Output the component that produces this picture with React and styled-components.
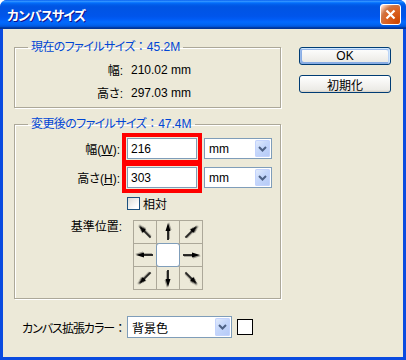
import React from "react";
import styled, { createGlobalStyle } from "styled-components";

const GlobalStyle = createGlobalStyle`
  html, body { margin: 0; padding: 0; background: #ffffff; }
  body {
    font-family: "Liberation Sans", "Noto Sans CJK JP", sans-serif;
    font-size: 12px;
    color: #000;
    font-feature-settings: "palt";
  }
`;

const Window = styled.div`
  width: 406px;
  height: 360px;
  box-sizing: border-box;
  display: flex;
  flex-direction: column;
  background: #0a4be0;
  border-radius: 7px 7px 0 0;
  overflow: hidden;
`;

const TitleBar = styled.div`
  height: 29px;
  flex: none;
  display: flex;
  align-items: center;
  justify-content: space-between;
  padding: 0 5px 0 7px;
  background: linear-gradient(
    to bottom,
    #0058ee 0%, #3593ff 4%, #288eff 6%, #127dff 8%, #036ffc 10%,
    #0262ee 14%, #0057e5 20%, #0054e3 24%, #0055eb 56%, #005bf5 66%,
    #026afe 76%, #0062ef 86%, #0052d6 92%, #0040ab 94%, #003092 100%
  );
`;

const Title = styled.span`
  color: #fff;
  font-weight: bold;
  font-size: 13px;
  letter-spacing: -1px;
  text-shadow: 1px 1px #0f1089;
`;

const CloseButton = styled.div`
  width: 21px;
  height: 21px;
  box-sizing: border-box;
  border: 1px solid #fff;
  border-radius: 3px;
  display: flex;
  align-items: center;
  justify-content: center;
  background: radial-gradient(circle at 90% 90%, #cc4600 0, #dc6527 55%, #cd7546 70%, #ffccb2 90%, #fff 100%);
`;

const Body = styled.div`
  flex: 1;
  margin: 0 3px 3px;
  background: #ece9d8;
  padding: 11px 12px 0 11px;
  display: flex;
  flex-direction: column;
`;

const Top = styled.div`
  display: grid;
  grid-template-columns: 267px 92px;
  column-gap: 18px;
`;

const LeftColumn = styled.div`
  display: flex;
  flex-direction: column;
  gap: 9px;
`;

const Group = styled.fieldset`
  margin: 0;
  padding: 0;
  min-width: 0;
  border: 1px solid #aca899;
  box-shadow: inset 1px 1px #fff, 1px 1px #fff;
`;

const Legend = styled.legend`
  margin-left: 13px;
  padding: 0 3px;
  line-height: 14px;
  color: #0046d5;
  white-space: nowrap;
  letter-spacing: -0.6px;
`;

const WideColon = styled.span`
  font-feature-settings: normal;
  letter-spacing: 0;
`;

const Latin = styled.span`
  letter-spacing: 0;
`;

const InfoGrid = styled.div`
  display: grid;
  grid-template-columns: 108px auto;
  column-gap: 8px;
  grid-auto-rows: 23px;
  align-items: center;
  padding: 4px 0 3px;
`;

const InfoLabel = styled.span`
  text-align: right;
`;

const EditArea = styled.div`
  padding: 7px 0 8px;
  display: flex;
  flex-direction: column;
`;

const FieldRow = styled.div`
  display: flex;
  align-items: center;
  gap: 7px;
  height: 21px;
  & + & { margin-top: 8px; }
`;

const FieldLabel = styled.span`
  width: 105px;
  text-align: right;
  u { text-decoration: underline; }
`;

const TextInput = styled.div`
  width: 70px;
  height: 21px;
  box-sizing: border-box;
  border: 1px solid #7f9db9;
  background: #fff;
  padding-left: 3px;
  display: flex;
  align-items: center;
  outline: ${(p) => (p.$marked ? "4px solid #ff0000" : "none")};
  outline-offset: 1px;
`;

const Select = styled.div`
  flex: none;
  width: ${(p) => p.$width}px;
  height: ${(p) => p.$height}px;
  box-sizing: border-box;
  border: 1px solid #7f9db9;
  background: #fff;
  padding-left: 4px;
  display: flex;
  align-items: center;
`;

const DropButton = styled.div`
  margin: 1px;
  margin-left: auto;
  width: 15px;
  align-self: stretch;
  border-radius: 2px;
  display: flex;
  align-items: center;
  justify-content: center;
  background: linear-gradient(135deg, #e6eefc 0%, #c5d7fb 45%, #b4c9f6 100%);
  box-shadow: inset 0 0 0 1px #c3d3fd;
`;

const CheckRow = styled.div`
  margin-top: 8px;
  padding-left: 112px;
  display: flex;
  align-items: center;
  gap: 3px;
  height: 14px;
`;

const CheckBox = styled.span`
  width: 13px;
  height: 13px;
  box-sizing: border-box;
  border: 1px solid #1c5180;
  background: linear-gradient(135deg, #dcdcd7 0%, #fff 80%);
`;

const AnchorRow = styled.div`
  margin-top: 10px;
  display: flex;
  align-items: flex-start;
`;

const AnchorLabel = styled.span`
  width: 107px;
  text-align: right;
  line-height: 14px;
`;

const AnchorGrid = styled.div`
  margin-left: 11px;
  display: grid;
  grid-template-columns: repeat(3, 22px);
  grid-template-rows: repeat(3, 22px);
  gap: 1px;
  padding: 1px;
  background: #aca899;
`;

const Cell = styled.div`
  background: #ece9d8;
  display: flex;
  align-items: center;
  justify-content: center;
`;

const CenterCell = styled.div`
  margin: -1px;
  background: #fff;
  border: 1px solid #7f9db9;
  border-radius: 3px;
`;

const ButtonColumn = styled.div`
  padding-top: 7px;
  display: flex;
  flex-direction: column;
  gap: 10px;
`;

const Button = styled.div`
  height: 18px;
  box-sizing: border-box;
  border: 1px solid #003c74;
  border-radius: 3px;
  display: flex;
  align-items: center;
  justify-content: center;
  background: linear-gradient(180deg, #fff 0%, #ecebe6 86%, #d6d0c5 100%);
  box-shadow: ${(p) =>
    p.$default
      ? "inset -1px 1px #cee7ff, inset 1px 2px #98b8ea, inset -2px 2px #bcd4f6, inset 1px -1px #89ade4, inset 2px -2px #89ade4"
      : "none"};
`;

const BottomRow = styled.div`
  margin-top: 17px;
  padding-left: 8px;
  display: flex;
  align-items: center;
`;

const BottomLabel = styled.span`
  width: 105px;
  flex: none;
  white-space: nowrap;
  letter-spacing: -1px;
`;

const Swatch = styled.span`
  margin-left: 5px;
  width: 16px;
  height: 16px;
  box-sizing: border-box;
  border: 1px solid #000;
  background: #fff;
`;

const Chevron = () => (
  <svg width="9" height="6" viewBox="0 0 9 6">
    <path d="M1 1 L4.5 4.5 L8 1" fill="none" stroke="#4d6185" strokeWidth="2" />
  </svg>
);

const Arrow = ({ angle }) => (
  <svg
    width="20"
    height="20"
    viewBox="0 0 20 20"
    style={{ transform: `rotate(${angle}deg)`, filter: "drop-shadow(1px 1px 0.6px rgba(0,0,0,0.35))" }}
  >
    <line x1="2" y1="10" x2="12" y2="10" stroke="#000" strokeWidth="1.6" />
    <polygon points="11,7.5 19,10 11,12.5" fill="#000" />
  </svg>
);

const cells = [-135, -90, -45, 180, null, 0, 135, 90, 45];

export default function App() {
  return (
    <>
      <GlobalStyle />
      <Window>
        <TitleBar>
          <Title>カンバスサイズ</Title>
          <CloseButton>
            <svg width="11" height="11" viewBox="0 0 11 11">
              <path d="M1.5 1.5 L9.5 9.5 M9.5 1.5 L1.5 9.5" stroke="#fff" strokeWidth="2.2" />
            </svg>
          </CloseButton>
        </TitleBar>
        <Body>
          <Top>
            <LeftColumn>
              <Group>
                <Legend>現在のファイルサイズ<WideColon>：</WideColon><Latin>45.2M</Latin></Legend>
                <InfoGrid>
                  <InfoLabel>幅:</InfoLabel>
                  <span>210.02 mm</span>
                  <InfoLabel>高さ:</InfoLabel>
                  <span>297.03 mm</span>
                </InfoGrid>
              </Group>
              <Group>
                <Legend>変更後のファイルサイズ<WideColon>：</WideColon><Latin>47.4M</Latin></Legend>
                <EditArea>
                  <FieldRow>
                    <FieldLabel>幅(<u>W</u>):</FieldLabel>
                    <TextInput $marked>216</TextInput>
                    <Select $width={68} $height={21}>
                      mm
                      <DropButton><Chevron /></DropButton>
                    </Select>
                  </FieldRow>
                  <FieldRow>
                    <FieldLabel>高さ(<u>H</u>):</FieldLabel>
                    <TextInput $marked>303</TextInput>
                    <Select $width={68} $height={21}>
                      mm
                      <DropButton><Chevron /></DropButton>
                    </Select>
                  </FieldRow>
                  <CheckRow>
                    <CheckBox />
                    <span>相対</span>
                  </CheckRow>
                  <AnchorRow>
                    <AnchorLabel>基準位置:</AnchorLabel>
                    <AnchorGrid>
                      {cells.map((a, i) =>
                        a === null ? (
                          <CenterCell key={i} />
                        ) : (
                          <Cell key={i}>
                            <Arrow angle={a} />
                          </Cell>
                        )
                      )}
                    </AnchorGrid>
                  </AnchorRow>
                </EditArea>
              </Group>
            </LeftColumn>
            <ButtonColumn>
              <Button $default>OK</Button>
              <Button>初期化</Button>
            </ButtonColumn>
          </Top>
          <BottomRow>
            <BottomLabel>カンバス拡張カラー<WideColon>：</WideColon></BottomLabel>
            <Select $width={105} $height={22}>
              背景色
              <DropButton><Chevron /></DropButton>
            </Select>
            <Swatch />
          </BottomRow>
        </Body>
      </Window>
    </>
  );
}
